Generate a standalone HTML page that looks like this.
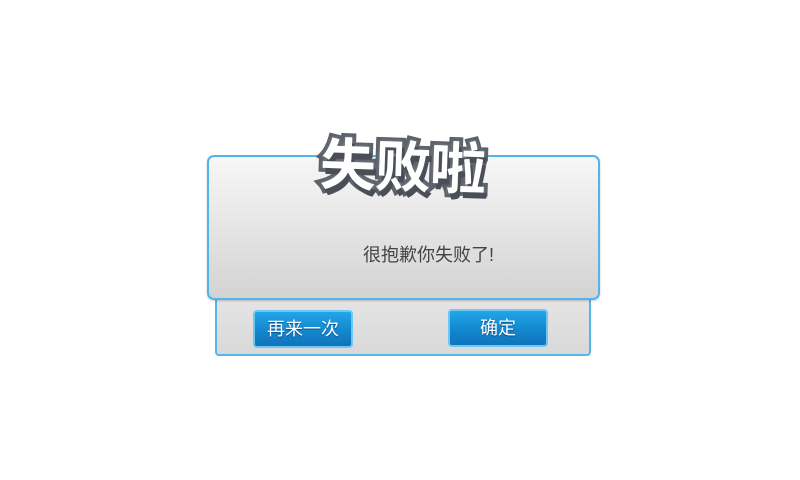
<!DOCTYPE html>
<html><head><meta charset="utf-8"><style>
body{margin:0;width:800px;height:480px;background:#fff;position:relative;overflow:hidden;font-family:"Liberation Sans","Noto Sans CJK SC",sans-serif}
.low{position:absolute;left:215px;top:290px;width:372px;height:64px;background:linear-gradient(#e6e6e6,#d9d9d9);border:2px solid #55b6ec;border-top:none;border-radius:0 0 4px 4px}
.up{position:absolute;left:207px;top:155px;width:389px;height:141px;background:linear-gradient(#f7f7f7,#d3d3d3);border:2px solid #52b4ec;border-radius:7px;box-shadow:0 1px 2px rgba(0,0,0,.2)}
.title{position:absolute;left:320px;top:128px;width:180px;white-space:nowrap;font-size:56px;line-height:80px;font-weight:bold;color:#fff;letter-spacing:-1px;-webkit-text-stroke:8px #5b606a;paint-order:stroke fill;text-shadow:3px 6px 0 #4a4e56,0 0 4px #888;transform:rotate(2deg)}
.msg{position:absolute;left:363px;top:241px;font-size:18px;color:#444}
.btn{position:absolute;width:96px;height:34px;border:2px solid #6cc7f4;border-radius:4px;background:linear-gradient(#21a6e6,#1487cf 55%,#0f73bb);color:#fff;font-size:18px;text-align:center;line-height:34px;text-shadow:0 1px 1px #06508a}
</style></head><body>
<div class="low"></div>
<div class="up"></div>
<div class="title">失败啦</div>
<div class="msg">很抱歉你失败了!</div>
<div class="btn" style="left:253px;top:310px">再来一次</div>
<div class="btn" style="left:448px;top:309px">确定</div>
</body></html>
